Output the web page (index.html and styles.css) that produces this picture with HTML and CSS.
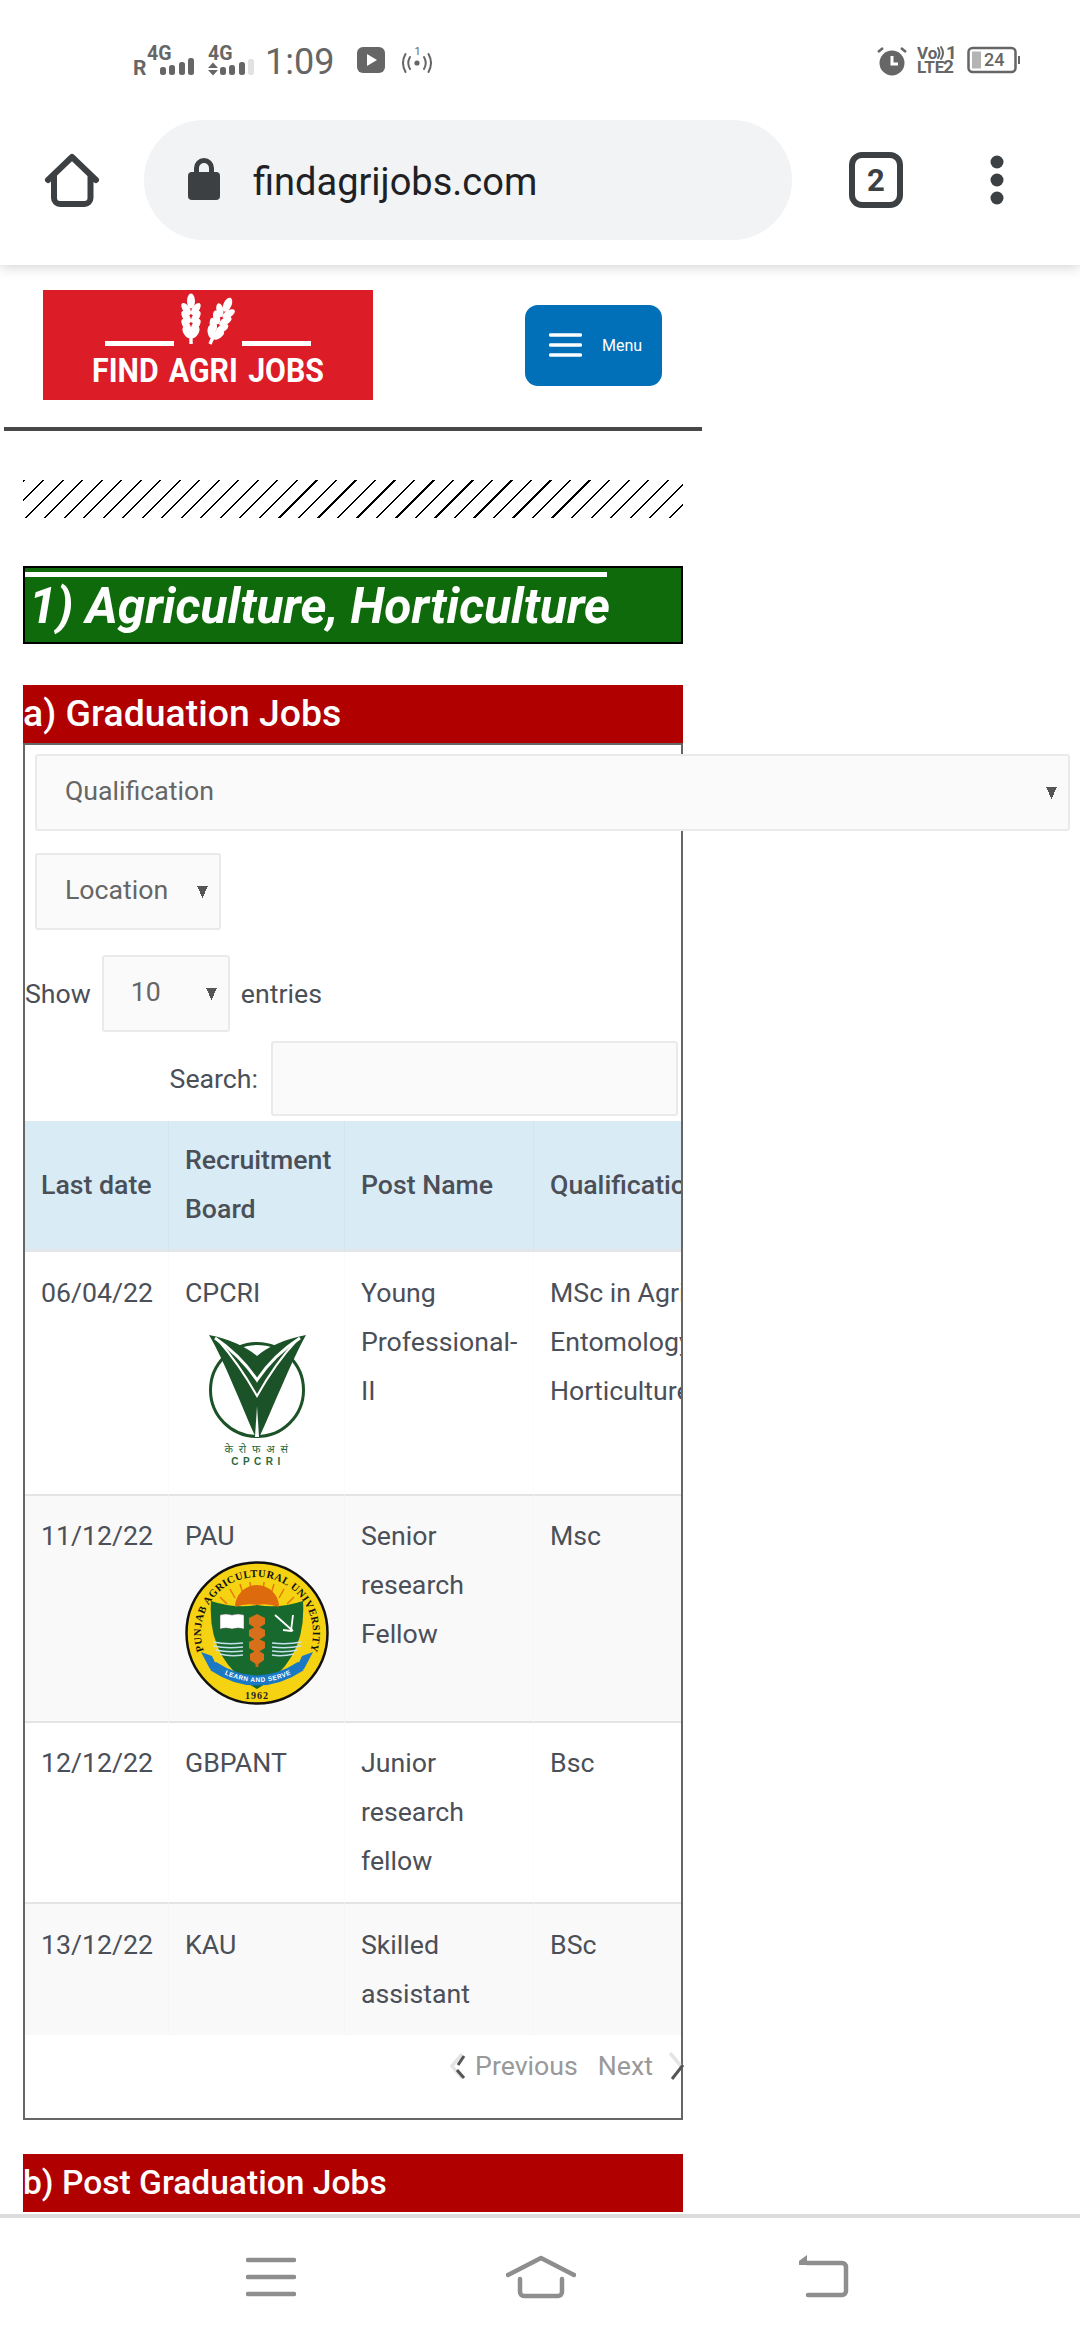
FILE: index.html
```html
<!DOCTYPE html>
<html lang="en">
<head>
<meta charset="utf-8">
<title>Find Agri Jobs</title>
<link rel="stylesheet" href="styles.css">
</head>
<body>
<div class="phone">
  <div class="status">
    <svg class="st-a st-up" width="62" height="44" viewBox="0 -8 62 44"><text class="st-big" x="0" y="29">R</text><text class="st-small" x="14" y="14">4G</text><rect x="27" y="21" width="6" height="8" rx="2.500"/><rect x="36" y="19" width="6" height="10" rx="2.500"/><rect x="46" y="16" width="6" height="13" rx="2.500"/><rect x="55" y="12" width="6" height="17" rx="2.500"/></svg>
    <svg class="st-b st-up" width="47" height="44" viewBox="0 -8 47 44"><text class="st-small" x="0" y="14">4G</text><path d="M5 16.500l5 5.500H0zM0 24h10l-5 5.500z"/><rect x="12" y="21" width="6" height="8" rx="2.500"/><rect x="21" y="19" width="6" height="10" rx="2.500"/><rect x="31" y="16" width="6" height="13" rx="2.500"/><rect class="st-off" x="40" y="13" width="6" height="16" rx="2.500"/></svg>
    <span class="clock">1:09</span>
    <svg class="st-play" width="28" height="26" viewBox="0 0 28 26"><rect width="28" height="26" rx="6"/><path class="st-white" d="M10 7l10 6-10 6z"/></svg>
    <svg class="st-radio st-up" width="30" height="44" viewBox="0 -8 30 44"><text class="st-tiny" x="12.500" y="9">1</text><circle cx="15" cy="17" r="2.600"/><path class="st-line" d="M8 11q-3.500 6 0 12M22 11q3.500 6 0 12M3.500 8q-5 9 0 18M26.500 8q5 9 0 18"/></svg>
    <div class="status-gap"></div>
    <svg class="st-alarm" width="30" height="30" viewBox="0 0 30 30"><circle cx="15" cy="17" r="12.500"/><path class="st-white-line" d="M15 10v8h6"/><path class="st-line2" d="M1 6l5-4M29 6l-5-4"/></svg>
    <svg class="st-vo st-up" width="42" height="44" viewBox="0 -8 42 44"><text class="st-vo-t" x="0" y="13">Vo</text><path class="st-line" d="M21 2q3 5 0 10M24 1q4 6 0 12"/><text class="st-vo-b" x="29" y="13">1</text><text class="st-vo-t" x="0" y="27">LTE</text><text class="st-vo-b" x="26" y="27">2</text></svg>
    <svg class="st-bat" width="53" height="28" viewBox="0 0 53 28"><rect class="st-batbox" x="1.500" y="2" width="47" height="24" rx="4"/><rect class="st-batfill" x="5" y="5.500" width="9" height="17"/><rect x="51" y="10" width="2" height="8"/><text class="st-battxt" x="17" y="20">24</text></svg>
  </div>
  <div class="toolbar">
    <svg class="tb-home" width="60" height="60" viewBox="0 0 60 60"><path d="M6 30L30 7l24 23M12 25v23a6 6 0 0 0 6 6h24.500a6 6 0 0 0 6-6V25"/></svg>
    <div class="omnibox">
      <svg class="lock" width="32" height="42" viewBox="0 0 32 42"><path class="lock-ring" d="M8.500 17V10a7.500 7.500 0 0 1 15 0v7"/><rect y="14" width="32" height="28" rx="4"/></svg>
      <span class="url">findagrijobs.com</span>
    </div>
    <div class="tabs">2</div>
    <svg class="dots" width="14" height="50" viewBox="0 0 14 50"><circle cx="7" cy="7" r="6.500"/><circle cx="7" cy="25" r="6.500"/><circle cx="7" cy="43" r="6.500"/></svg>
  </div>
  <main class="page">
    <header class="site-head">
      <svg class="logo" width="330" height="110" viewBox="0 0 330 110">
        <rect width="330" height="110" fill="#dc1c26"/>
        <defs>
          <g id="wheat">
            <rect x="-1.700" y="-14" width="3.400" height="14"/>
            <ellipse cx="0" cy="-43" rx="4" ry="7.500"/>
            <g id="wheat-l">
              <ellipse cx="-4.800" cy="-35" rx="3.500" ry="7" transform="rotate(-35 -4.800 -35)"/>
              <ellipse cx="-4.800" cy="-27" rx="3.500" ry="7" transform="rotate(-35 -4.800 -27)"/>
              <ellipse cx="-4.800" cy="-19" rx="3.500" ry="7" transform="rotate(-35 -4.800 -19)"/>
              <ellipse cx="-4.300" cy="-11.500" rx="3.200" ry="6.500" transform="rotate(-30 -4.300 -11.500)"/>
            </g>
            <use href="#wheat-l" transform="scale(-1 1)"/>
          </g>
        </defs>
        <g fill="#fff">
          <rect x="62" y="51" width="69" height="5"/><rect x="199" y="51" width="69" height="5"/>
          <use href="#wheat" transform="translate(148 54)"/>
          <use href="#wheat" transform="translate(167 54) rotate(24)"/>
          <text class="logo-text" x="49" y="92" textLength="232" lengthAdjust="spacingAndGlyphs">FIND AGRI JOBS</text>
        </g>
      </svg>
      <button class="menu-btn" type="button">
        <svg width="33" height="24" viewBox="0 0 33 24"><path d="M1.500 2h30M1.500 12h30M1.500 22h30"/></svg>
        <span>Menu</span>
      </button>
    </header>
    <div class="rule"></div>
    <div class="content">
      <div class="hatch"></div>
      <h2 class="cat"><span class="cat-bar"></span><em>1) Agriculture, Horticulture</em></h2>
      <h3 class="sub sub-a">a) Graduation Jobs</h3>
      <section class="box">
        <select class="sel sel-q"><option>Qualification</option></select>
        <select class="sel sel-l"><option>Location</option></select>
        <div class="len"><span>Show</span><select class="sel sel-n"><option>10</option></select><span>entries</span></div>
        <div class="search"><label for="s">Search:</label><input id="s" type="text"></div>
        <div class="table-wrap">
          <table>
            <colgroup><col class="c1"><col class="c2"><col class="c3"><col class="c4"></colgroup>
            <thead><tr><th>Last date</th><th>Recruitment Board</th><th>Post Name</th><th>Qualification</th></tr></thead>
            <tbody>
              <tr>
                <td>06/04/22</td>
                <td>CPCRI
                  <svg class="org" width="144" height="161" viewBox="0 0 144 161">
                    <circle cx="72" cy="72" r="46.500" fill="none" stroke="#1b5227" stroke-width="3"/>
                    <path fill="#1b5227" d="M24 17C44 21 62 29 72 38 82 29 100 21 121 17 106 44 86 94 74 120H71C59 94 40 44 24 17Z"/>
                    <path fill="none" stroke="#fff" stroke-width="3" d="M30 20C46 31 62 47 72 62 82 47 98 31 115 20"/>
                    <path fill="none" stroke="#fff" stroke-width="2" d="M33 22C47 38 62 60 72 78 82 60 97 38 112 22"/>
                    <path fill="#fff" d="M72 88l2 31h-4z"/>
                    <text class="cp-hi" x="72" y="135">के रो फ अ सं</text>
                    <text class="cp-en" x="73" y="147">CPCRI</text>
                  </svg>
                </td>
                <td>Young Professional-II</td>
                <td>MSc in Agri<br>Entomology,<br>Horticulture</td>
              </tr>
              <tr class="alt">
                <td>11/12/22</td>
                <td>PAU
                  <svg class="org org-pau" width="144" height="144" viewBox="0 0 144 144">
                    <defs>
                      <path id="pauArc" d="M20.100 93A56 56 0 1 1 123.900 93"/>
                      <path id="pauRib" d="M30 108Q72 134 116 108"/>
                    </defs>
                    <circle cx="72" cy="72" r="70.500" fill="#f6d312" stroke="#111" stroke-width="2.500"/>
                    <text class="pau-arc"><textPath href="#pauArc" startOffset="50%">· PUNJAB AGRICULTURAL UNIVERSITY ·</textPath></text>
                    <path fill="none" stroke="#e8760c" stroke-width="1.500" d="M42 43L35 36M50 37L45 28M58 33L55 23M66 31L65 21M78 31L79 21M86 33L89 23M94 37L99 28M102 43L109 36"/>
                    <path fill="#17692e" d="M26 40Q50 48 72 44 94 48 118 40 122 100 72 128 22 100 26 40Z"/>
                    <path fill="#dd6a0c" d="M50 46A22 22 0 0 1 94 46Q83 42 72 44 61 42 50 46Z"/>
                    <path fill="#fff" stroke="#555" stroke-width=".5" d="M35 54q6-2 12 0 6-2 12 0v14q-6-2-12 0-6-2-12 0z"/>
                    <path fill="none" stroke="#fff" stroke-width="1.800" d="M90 54l18 16M108 54l-2 16-8-1"/>
                    <path fill="none" stroke="#c6e0f0" stroke-width="1.500" d="M28 81q14 3 30 1M28 85q14 3 30 1M31 89q12 3 27 1M35 93q10 3 23 1M87 82q15 2 29-1M87 86q15 2 29-1M87 90q13 2 26-1M87 94q10 2 22-1"/>
                    <rect x="70.500" y="54" width="3" height="52" fill="#c8651a"/>
                    <path fill="#d76f1b" d="M72 53l8 4v6l-8 5-8-5v-6zM72 65l8 4v6l-8 5-8-5v-6zM72 77l8 4v6l-8 5-8-5v-6zM72 89l7 4v6l-7 5-7-5v-6z"/>
                    <path fill="none" stroke="#1a78c4" stroke-width="10" d="M28 105Q72 134 116 105"/>
                    <path fill="#1a78c4" d="M16 91l11 4 6 13-8 0zM128 91l-11 4-6 13 8 0z"/>
                    <text class="pau-rib"><textPath href="#pauRib" startOffset="50%">LEARN AND SERVE</textPath></text>
                    <text class="pau-yr" x="72" y="138">1962</text>
                  </svg>
                </td>
                <td>Senior research Fellow</td>
                <td>Msc</td>
              </tr>
              <tr>
                <td>12/12/22</td>
                <td>GBPANT</td>
                <td>Junior research fellow</td>
                <td>Bsc</td>
              </tr>
              <tr class="alt">
                <td>13/12/22</td>
                <td>KAU</td>
                <td>Skilled assistant</td>
                <td>BSc</td>
              </tr>
            </tbody>
          </table>
        </div>
        <nav class="pager">
          <svg class="chev" width="18" height="28" viewBox="0 0 18 28"><path class="chev-l" d="M13 2L3 14l10 12"/><path class="chev-d" d="M15 4l-6 9M8 18l7 8"/></svg>
          <span class="pg-prev">Previous</span>
          <span class="pg-next">Next</span>
          <svg class="chev chev-next" width="18" height="28" viewBox="0 0 18 28"><path class="chev-l" d="M3 1l11 13"/><path class="chev-d" d="M16 13L5 27"/></svg>
        </nav>
      </section>
      <h3 class="sub sub-b">b) Post Graduation Jobs</h3>
    </div>
  </main>
  <div class="navbar">
    <svg class="nv-menu" width="50" height="44" viewBox="0 0 50 44"><path d="M2 5h46M2 22h46M2 39h46"/></svg>
    <svg class="nv-home" width="70" height="44" viewBox="0 0 70 44"><path d="M2 20L35 3l33 17M14 24v13a4 4 0 0 0 4 4h34a4 4 0 0 0 4-4V24"/></svg>
    <svg class="nv-back" width="50" height="44" viewBox="0 0 50 44"><path d="M8 8h35a4 4 0 0 1 4 4v24a4 4 0 0 1-4 4H9"/><path class="nv-fill" d="M0 10V6l8-6v10z"/></svg>
  </div>
</div>
</body>
</html>
```
FILE: styles.css
```css
* { box-sizing: border-box; }
html, body { margin: 0; padding: 0; }
body { font-family: Roboto, "Liberation Sans", sans-serif; color: #4b4f58; background: #fff; }
.phone { width: 1080px; height: 2340px; display: flex; flex-direction: column; overflow: hidden; background: #fff; }

/* status bar */
.status { height: 110px; flex: none; display: flex; align-items: flex-start; padding: 46px 60px 0 133px; background: #fff; position: relative; z-index: 3; }
.status svg { fill: #666; flex: none; display: block; }
.status .st-up { margin-top: -8px; }
.st-big { font: 700 21px Roboto, sans-serif; }
.st-small { font: 700 19.500px Roboto, sans-serif; }
.st-tiny { font: 400 11px Roboto, sans-serif; }
.st-off { fill: #e2e2e2; }
.st-b { margin-left: 13px; }
.clock { font-size: 36px; line-height: 32px; margin-left: 10px; width: 65px; color: #666; }
.status .st-play { margin-left: 27px; margin-top: 1px; }
.st-white { fill: #fff; }
.st-radio { margin-left: 17px; }
.st-line { fill: none; stroke: #666; stroke-width: 2; stroke-linecap: round; }
.status-gap { flex: 1; }
.st-white-line { fill: none; stroke: #fff; stroke-width: 3; }
.st-line2 { fill: none; stroke: #666; stroke-width: 2.500; }
.st-vo { margin-left: 10px; }
.st-vo-t { font: 700 17px Roboto, sans-serif; }
.st-vo-b { font: 700 19px Roboto, sans-serif; }
.st-bat { margin-left: 8px; }
.status .st-batbox { fill: none; stroke: #666; stroke-width: 2.500; }
.status .st-batfill { fill: #b4b4b4; }
.st-battxt { font: 500 18px Roboto, sans-serif; }

/* browser toolbar */
.toolbar { height: 155px; flex: none; display: flex; align-items: flex-start; padding: 10px 0 0 42px; background: #fff; box-shadow: 0 2px 12px rgba(0,0,0,.18); position: relative; z-index: 2; }
.tb-home { margin-top: 30px; flex: none; }
.tb-home path { fill: none; stroke: #3c4043; stroke-width: 6; stroke-linecap: round; stroke-linejoin: round; }
.omnibox { width: 648px; height: 120px; margin-left: 42px; border-radius: 60px; background: #f1f3f4; display: flex; align-items: center; padding-left: 44px; flex: none; }
.lock { fill: #3c4043; flex: none; margin-top: -2px; }
.lock-ring { fill: none; stroke: #3c4043; stroke-width: 5; }
.url { margin-left: 33px; font-size: 38px; color: #202124; line-height: 1; margin-top: 4px; }
.tabs { width: 54px; height: 56px; margin: 32px 0 0 57px; border: 6px solid #3c4043; border-radius: 13px; display: flex; align-items: center; justify-content: center; font-size: 31px; font-weight: 700; color: #3c4043; flex: none; }
.dots { fill: #3c4043; margin: 35px 0 0 87px; flex: none; }

/* page */
.page { flex: 1; min-height: 0; overflow: hidden; background: #fff; }
.site-head { width: 698px; margin-left: 4px; padding: 25px 40px 27px 39px; display: flex; justify-content: space-between; align-items: center; }
.logo { display: block; }
.logo-text { font: 700 33px Roboto, sans-serif; word-spacing: 3px; }
.menu-btn { width: 137px; height: 81px; border: 0; border-radius: 13px; background: #0170b9; color: #fff; display: flex; align-items: center; padding: 0 0 0 24px; font-family: Roboto, sans-serif; font-size: 16px; }
.menu-btn svg path { fill: none; stroke: #fff; stroke-width: 3.500; stroke-linecap: round; }
.menu-btn span { margin-left: 20px; }
.rule { width: 698px; height: 4px; margin-left: 4px; background: #484848; }
.content { width: 660px; margin-left: 23px; }
.hatch { height: 38px; margin-top: 49px; background: repeating-linear-gradient(135deg, #000 0, #000 1.600px, transparent 1.600px, transparent 13.800px); }
.cat { height: 78px; margin: 48px 0 0; background: #0f6a0b; border: 2.500px solid #000; color: #fff; padding: 0; font-size: 49.500px; line-height: 56px; font-weight: 700; overflow: hidden; }
.cat-bar { display: block; width: 582px; height: 5px; margin-top: 4px; background: #fff; }
.cat em { display: block; padding-left: 4px; margin-top: 1px; font-style: italic; }
.sub { margin: 0; background: #b00000; color: #fff; font-weight: 500; line-height: 1; display: flex; align-items: center; }
.sub-a { height: 58px; margin-top: 41px; font-size: 37.400px; }
.sub-b { height: 58px; margin-top: 34px; font-size: 33.600px; }
.box { height: 1377px; border: 2px solid #666; padding-top: 9px; }
.sel { display: block; height: 77px; border: 2px solid #eaeaea; border-radius: 3px; color: #666; font: 400 26.700px Roboto, sans-serif; line-height: 70px; padding: 0 0 3px 28px; appearance: none; -webkit-appearance: none; background: #fafafa conic-gradient(from -24deg at 50% 100%, #555 0 48deg, transparent 0) no-repeat right 11px center / 11px 12px; }
.sel-q { width: 1035px; margin-left: 10px; }
.sel-l { width: 186px; margin: 22px 0 0 10px; }
.len { display: flex; align-items: center; margin-top: 25px; font-size: 26.700px; color: #4b4f58; }
.sel-n { width: 128px; margin: 0 11px 0 11px; padding-left: 27px; }
.search { display: flex; align-items: center; justify-content: flex-end; margin-top: 9px; padding-right: 3px; font-size: 26.700px; }
.search input { width: 407px; height: 75px; margin-left: 13px; border: 2px solid #eaeaea; border-radius: 3px; background: #fafafa; }
.table-wrap { overflow: hidden; margin-top: 5px; }
table { table-layout: fixed; width: 800px; border-collapse: separate; border-spacing: 0; font-size: 26.700px; line-height: 49px; color: #4b4f58; }
.c1 { width: 143px; } .c2 { width: 176px; } .c3 { width: 189px; } .c4 { width: 292px; }
th { background: #d9ebf5; text-align: left; font-weight: 500; padding: 15px 8px 15px 16px; border-bottom: 3px solid #e3e6e8; border-left: 1px solid #d3e6f0; }
td { padding: 16px 8px 16px 16px; vertical-align: top; border-top: 2px solid #e4e4e4; border-left: 1px solid #fcfcfc; }
tbody tr:first-child td { border-top: 0; padding-top: 17px; padding-bottom: 15px; }
tbody tr:last-child td { padding-top: 17px; }
th:first-child, td:first-child { border-left: 0; }
.alt td { background: #f9f9f9; border-left-color: #f6f6f6; }
.org { display: block; }
.cp-hi { font: 400 11px "Noto Sans", "Liberation Sans", sans-serif; fill: #2c6a3c; text-anchor: middle; letter-spacing: 1.500px; }
.cp-en { font: 700 10px "Liberation Sans", sans-serif; fill: #2c6a3c; text-anchor: middle; letter-spacing: 4.500px; }
.pau-arc { font: 700 10.500px "Liberation Serif", serif; fill: #111; text-anchor: middle; letter-spacing: .5px; }
.pau-rib { font: 700 6.500px "Liberation Sans", sans-serif; fill: #fff; text-anchor: middle; letter-spacing: .5px; }
.pau-yr { font: 700 10px "Liberation Serif", serif; fill: #222; text-anchor: middle; letter-spacing: 1px; }
.pager { display: flex; align-items: center; justify-content: flex-end; margin-top: 13px; height: 36px; font-size: 26.700px; color: #999; margin-right: -4px; }
.chev { flex: none; }
.chev-l { fill: none; stroke: #e4e4e4; stroke-width: 3.500; }
.chev-d { fill: none; stroke: #555; stroke-width: 3; }
.pg-prev { margin-left: 8px; }
.pg-next { margin-left: 20px; }
.chev-next { margin-left: 14px; }

/* bottom navigation */
.navbar { height: 126px; flex: none; border-top: 4px solid #dcdcdc; background: #fff; display: flex; align-items: flex-start; padding: 37px 0 0 246px; }
.navbar svg { flex: none; fill: none; stroke: #8e8e8e; stroke-width: 4.500; stroke-linecap: round; stroke-linejoin: round; }
.nv-home { margin-left: 210px; }
.nv-back { margin-left: 223px; }
.navbar .nv-fill { fill: #8e8e8e; stroke: none; }
```
